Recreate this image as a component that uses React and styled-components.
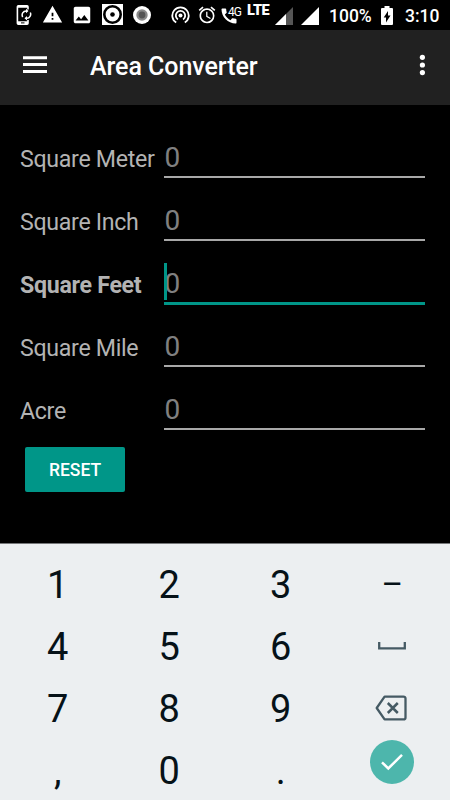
import styled, { createGlobalStyle } from "styled-components"
import { MdAlarm, MdCall, MdImage, MdWarning } from "react-icons/md"

const GlobalStyle = createGlobalStyle`
  * {
    box-sizing: border-box;
    margin: 0;
    padding: 0;
  }

  body {
    background-color: #000;
    font-family: Roboto, "Noto Sans", sans-serif;
    overflow: hidden;
  }
`

const Screen = styled.div`
  display: flex;
  flex-direction: column;
  width: 450px;
  height: 800px;
  overflow: hidden;
  background-color: #000;
`

const StatusBar = styled.div`
  display: flex;
  flex: none;
  align-items: flex-start;
  height: 30px;
  color: #fff;

  svg {
    display: block;
  }
`

const StatusItem = styled.div`
  flex: none;
  width: ${(props) => props.$width}px;
  margin-left: ${(props) => props.$gap}px;
  margin-top: ${(props) => props.$top}px;
`

const StatusText = styled(StatusItem)`
  font-size: 17.5px;
  font-weight: 500;
  line-height: 20px;
  white-space: nowrap;
`

const NetworkText = styled(StatusItem)`
  font-size: 14.5px;
  font-weight: 900;
  line-height: 16px;
  letter-spacing: -0.5px;
`

const CallStatus = styled(StatusItem)`
  position: relative;
`

const CallBadge = styled.span`
  position: absolute;
  top: 0;
  left: 9px;
  font-size: 12px;
  line-height: 12px;
  letter-spacing: -1px;
`

const AppBar = styled.header`
  display: flex;
  flex: none;
  align-items: center;
  height: 75px;
  padding: 0 25px 0 23px;
  background-color: #212121;
  color: #fff;
`

const IconButton = styled.button`
  display: flex;
  border: none;
  background: none;
  color: inherit;
  margin-top: -5px;
`

const Title = styled.h1`
  flex: 1;
  margin: -1px 0 0 43px;
  font-size: 25px;
  font-weight: 500;
  line-height: 30px;
  letter-spacing: -0.05px;
`

const Form = styled.main`
  flex: 1;
  padding: 34px 25px 0 20px;
`

const Row = styled.div`
  display: flex;
  align-items: baseline;
  height: 63px;
`

const Label = styled.label`
  width: 144px;
  flex: none;
  font-size: 23.2px;
  font-weight: ${(props) => (props.$active ? 700 : 400)};
  letter-spacing: ${(props) => (props.$active ? -0.3 : -0.32)}px;
  color: #b3b3b3;
  white-space: nowrap;
`

const Field = styled.div`
  position: relative;
  flex: 1;
  padding-left: 0.5px;
  font-size: 28px;
  line-height: 37px;
  color: #808080;
  border-bottom: ${(props) =>
    props.$active ? "3px solid #009688" : "2px solid #a8a8a8"};
`

const Caret = styled.span`
  position: absolute;
  top: -2px;
  left: 0;
  width: 3px;
  height: 37px;
  background-color: #009688;
`

const ResetButton = styled.button`
  display: block;
  width: 100px;
  height: 45px;
  margin: -7px 0 0 5px;
  border: none;
  border-radius: 2px;
  background-color: #009688;
  color: #fff;
  font-family: inherit;
  font-size: 17.5px;
  font-weight: 500;
`

const Keypad = styled.div`
  display: grid;
  flex: none;
  grid-template-columns: repeat(4, 111.5px);
  grid-auto-rows: 62px;
  height: 257px;
  padding: 9px 2px 0 1.5px;
  border-top: 1px solid #757779;
  background-color: #eceff1;
`

const Key = styled.button`
  display: flex;
  align-items: center;
  justify-content: center;
  border: none;
  background: none;
  color: #061218;
  font-family: inherit;
  font-size: ${(props) => (props.$small ? 33 : 38)}px;
  line-height: 62px;
`

const KeyText = styled.span`
  padding: 2px 0 0 1px;
`

const DoneCircle = styled.span`
  display: flex;
  align-items: center;
  justify-content: center;
  width: 44px;
  height: 44px;
  margin-top: -16px;
  border-radius: 50%;
  background-color: #4db6ac;
`

const units = [
  "Square Meter",
  "Square Inch",
  "Square Feet",
  "Square Mile",
  "Acre",
]

const keys = [
  "1", "2", "3", "–",
  "4", "5", "6", "space",
  "7", "8", "9", "backspace",
  ",", "0", ".", "done",
]

function PhoneSyncIcon() {
  return (
    <svg width="16" height="20" viewBox="0 0 16 20">
      <path
        d="M2.300 0h8.800a1.700 1.700 0 0 1 1.700 1.700V4.500h-1.600V2.800H2.200v13.400h9V15h1.600v3.300a1.700 1.700 0 0 1-1.700 1.700H2.300a1.700 1.700 0 0 1-1.700-1.700V1.700A1.700 1.700 0 0 1 2.300 0z"
        fill="#fff"
      />
      <path d="M5 17.900h3.500" stroke="#000" strokeWidth="1" />
      <path
        d="M6.700 12a4 4 0 0 1 3.500-6M14.300 7.500a4 4 0 0 1-3.500 5.700"
        fill="none"
        stroke="#fff"
        strokeWidth="1.500"
      />
      <path d="M10 3.800v4.400l2.500-2.200zM11 11v4.400L8.500 13.200z" fill="#fff" />
    </svg>
  )
}

function TargetIcon() {
  return (
    <svg width="21" height="21" viewBox="0 0 21 21">
      <rect width="21" height="21" fill="#fff" />
      <circle cx="10.500" cy="10.500" r="8.200" fill="none" stroke="#000" strokeWidth="2.600" />
      <circle cx="10.500" cy="10.500" r="2.300" fill="#000" />
    </svg>
  )
}

function RecordIcon() {
  return (
    <svg width="18" height="18" viewBox="0 0 18 18">
      <circle cx="9" cy="9" r="9" fill="#fff" />
      <circle cx="9" cy="9" r="5.700" fill="#8a8a8a" />
      <circle cx="9" cy="9" r="3.400" fill="#555" />
    </svg>
  )
}

function HotspotIcon() {
  return (
    <svg width="19" height="18" viewBox="0 0 19 18" fill="none" stroke="#fff" strokeWidth="1.800">
      <circle cx="9.500" cy="9.500" r="2" fill="#fff" stroke="none" />
      <path d="M6.900 13.500a4.700 4.700 0 1 1 5.200 0" />
      <path d="M5.200 16.600a8.200 8.200 0 1 1 8.600 0" />
    </svg>
  )
}

function SignalIcon({ partial }) {
  return (
    <svg width="18" height="18" viewBox="0 0 18 18">
      <path d="M0 18 18 0v18z" fill={partial ? "#555" : "#fff"} />
      {partial && <path d="M0 18 11 7v11z" fill="#fff" />}
    </svg>
  )
}

function BatteryIcon() {
  return (
    <svg width="12" height="19" viewBox="0 0 12 19">
      <path d="M3.500 0h5v2H11a1 1 0 0 1 1 1v15a1 1 0 0 1-1 1H1a1 1 0 0 1-1-1V3a1 1 0 0 1 1-1h2.500z" fill="#fff" />
      <path d="M7 5v4.500h2.500L5 16.500v-5H2.700z" fill="#000" />
    </svg>
  )
}

function MenuIcon() {
  return (
    <svg width="24" height="18" viewBox="0 0 24 18" fill="currentColor">
      <path d="M0 .2h24v3H0zM0 7h24v3H0zM0 13.900h24v3H0z" />
    </svg>
  )
}

function MoreIcon() {
  return (
    <svg width="6" height="22" viewBox="0 0 6 22" fill="currentColor">
      <circle cx="3.400" cy="3.300" r="2.600" />
      <circle cx="3.400" cy="11" r="2.600" />
      <circle cx="3.400" cy="18.600" r="2.600" />
    </svg>
  )
}

function SpaceIcon() {
  return (
    <svg width="28" height="8" viewBox="0 0 28 8" fill="none" stroke="#455a64" strokeWidth="2.300">
      <path d="M1.200 0v6.300h25.600V0" />
    </svg>
  )
}

function BackspaceIcon() {
  return (
    <svg width="33" height="26" viewBox="0 0 33 26" fill="none" stroke="#455a64" strokeWidth="2.300">
      <path d="M9.600 1.600H28.500a2 2 0 0 1 2 2v18.800a2 2 0 0 1-2 2H9.600L1.700 13z" strokeLinejoin="round" />
      <path d="m12.800 8 10 10m0-10-10 10" strokeWidth="2.500" />
    </svg>
  )
}

function DoneIcon() {
  return (
    <svg width="22" height="18" viewBox="0 0 22 18" fill="none" stroke="#fff" strokeWidth="2.500">
      <path d="m1 9.300 6.300 6.200L21 1.800" />
    </svg>
  )
}

function KeyFace({ value }) {
  if (value === "space") return <SpaceIcon />
  if (value === "backspace") return <BackspaceIcon />
  if (value === "done")
    return (
      <DoneCircle>
        <DoneIcon />
      </DoneCircle>
    )

  return <KeyText>{value}</KeyText>
}

function Status() {
  return (
    <StatusBar>
      <StatusItem $width={16} $gap={16} $top={5}>
        <PhoneSyncIcon />
      </StatusItem>
      <StatusItem $width={21} $gap={10} $top={4}>
        <MdWarning size={21} />
      </StatusItem>
      <StatusItem $width={22} $gap={8} $top={4}>
        <MdImage size={22} />
      </StatusItem>
      <StatusItem $width={21} $gap={9} $top={4}>
        <TargetIcon />
      </StatusItem>
      <StatusItem $width={18} $gap={10} $top={6}>
        <RecordIcon />
      </StatusItem>
      <StatusItem $width={19} $gap={20} $top={6}>
        <HotspotIcon />
      </StatusItem>
      <StatusItem $width={20} $gap={7} $top={5}>
        <MdAlarm size={20} />
      </StatusItem>
      <CallStatus $width={20} $gap={2} $top={6}>
        <MdCall size={20} />
        <CallBadge>4G</CallBadge>
      </CallStatus>
      <NetworkText $width={24} $gap={8} $top={3}>
        LTE
      </NetworkText>
      <StatusItem $width={18} $gap={4} $top={7}>
        <SignalIcon partial />
      </StatusItem>
      <StatusItem $width={18} $gap={8} $top={7}>
        <SignalIcon />
      </StatusItem>
      <StatusText $width={43} $gap={10} $top={6}>
        100%
      </StatusText>
      <StatusItem $width={12} $gap={9} $top={6}>
        <BatteryIcon />
      </StatusItem>
      <StatusText $width={36} $gap={12} $top={6}>
        3:10
      </StatusText>
    </StatusBar>
  )
}

function App() {
  const active = "Square Feet"

  return (
    <>
      <GlobalStyle />
      <Screen>
        <Status />
        <AppBar>
          <IconButton aria-label="Menu">
            <MenuIcon />
          </IconButton>
          <Title>Area Converter</Title>
          <IconButton aria-label="More options">
            <MoreIcon />
          </IconButton>
        </AppBar>
        <Form>
          {units.map((unit) => (
            <Row key={unit}>
              <Label $active={unit === active}>{unit}</Label>
              <Field $active={unit === active}>
                {unit === active && <Caret />}0
              </Field>
            </Row>
          ))}
          <ResetButton>RESET</ResetButton>
        </Form>
        <Keypad>
          {keys.map((key) => (
            <Key key={key} $small={key === "–"}>
              <KeyFace value={key} />
            </Key>
          ))}
        </Keypad>
      </Screen>
    </>
  )
}

export default App
